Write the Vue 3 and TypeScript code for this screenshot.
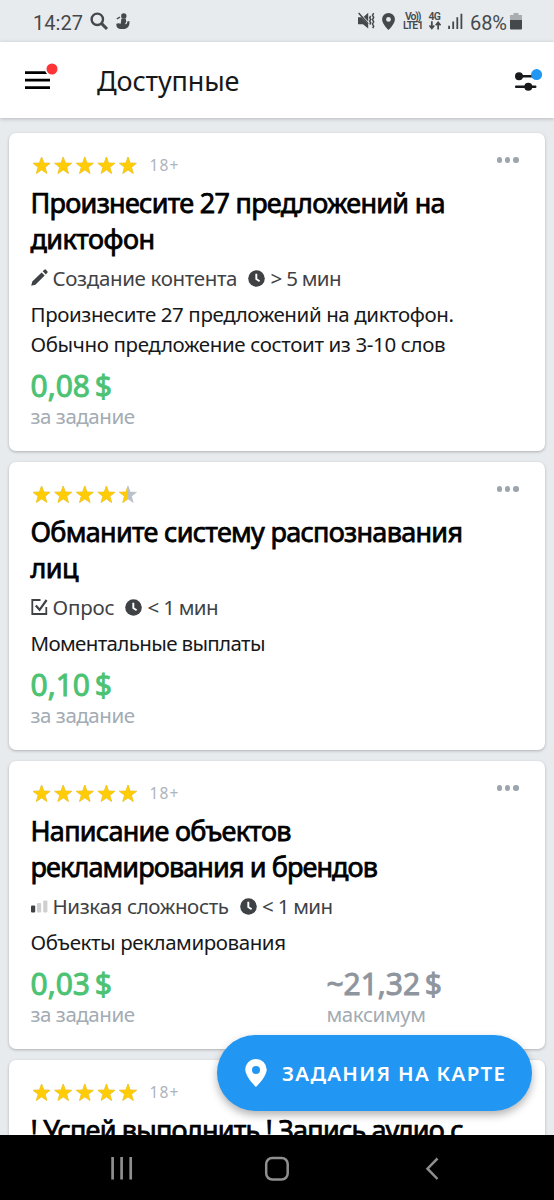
<script setup lang="ts">
import type { Directive } from 'vue'

interface Line {
  text: string
  width: number
}

interface Task {
  id: number
  rating: number
  adult: boolean
  title: Line[]
  kind?: 'pencil' | 'check' | 'level'
  kindLabel?: Line
  time?: string
  description?: Line[]
  price?: string
  max?: string
}

const tasks: Task[] = [
  {
    id: 1,
    rating: 4.9,
    adult: true,
    title: [
      { text: 'Произнесите 27 предложений на', width: 415 },
      { text: 'диктофон', width: 124.5 },
    ],
    kind: 'pencil',
    kindLabel: { text: 'Создание контента', width: 185 },
    time: '> 5 мин',
    description: [
      { text: 'Произнесите 27 предложений на диктофон.', width: 423.5 },
      { text: 'Обычно предложение состоит из 3-10 слов', width: 415 },
    ],
    price: '0,08 $',
  },
  {
    id: 2,
    rating: 4.5,
    adult: false,
    title: [
      { text: 'Обманите систему распознавания', width: 432.5 },
      { text: 'лиц', width: 48 },
    ],
    kind: 'check',
    kindLabel: { text: 'Опрос', width: 62 },
    time: '< 1 мин',
    description: [{ text: 'Моментальные выплаты', width: 235 }],
    price: '0,10 $',
  },
  {
    id: 3,
    rating: 5,
    adult: true,
    title: [
      { text: 'Написание объектов', width: 261 },
      { text: 'рекламирования и брендов', width: 347.5 },
    ],
    kind: 'level',
    kindLabel: { text: 'Низкая сложность', width: 176.5 },
    time: '< 1 мин',
    description: [{ text: 'Объекты рекламирования', width: 255.5 }],
    price: '0,03 $',
    max: '~21,32 $',
  },
  {
    id: 4,
    rating: 5,
    adult: true,
    title: [{ text: '! Успей выполнить ! Запись аудио с', width: 433 }],
  },
]

const starPath = 'M9 .6 11.1 6.700 17.500 6.900 12.400 10.800 14.200 17 9 13.400 3.800 17 5.600 10.800 .5 6.900 6.900 6.700Z'

/** Tracks a line of text so that it spans the given width. */
const vFit: Directive<HTMLElement, number> = {
  mounted(el, { value }) {
    const count = (el.textContent ?? '').length
    const natural = el.getBoundingClientRect().width
    const spacing = (value - natural) / Math.max(1, count - 1)
    el.style.letterSpacing = `${spacing.toFixed(3)}px`
    el.style.marginRight = `${(-spacing).toFixed(3)}px`
  },
}

function fill(rating: number, n: number): number {
  return 18.5 * Math.min(1, Math.max(0, rating - n + 1))
}
</script>

<template>
  <div class="screen">
    <div class="status">
      <span v-fit="50" class="clock">14:27</span>
      <svg class="s-search" width="19" height="19" viewBox="0 0 19 19">
        <circle cx="7.3" cy="7.3" r="5.7" fill="none" stroke="#45494c" stroke-width="2.4" />
        <path d="M11.4 11.4 17 17" stroke="#45494c" stroke-width="3" />
      </svg>
      <svg class="s-app" width="14" height="17" viewBox="0 0 14 17" fill="#45494c">
        <circle cx="7.8" cy="3" r="2.7" />
        <path d="M5.4 5.6h4.3l.6 3.2-1.4 2.4c1.8.1 2.6-.9 2.3-2.6l2.2-.5c.5 4-1.1 7.4-4.6 7.9H4.2C1.8 15.900 0 13.700 .4 10.800c1.300-.9 3-.8 4.300-.1Z" />
        <path d="M.8 5.800 4 4.200" stroke="#45494c" stroke-width="1.300" />
      </svg>
      <span class="spacer"></span>
      <svg class="s-mute" width="17" height="18" viewBox="0 0 17 18" fill="#45494c">
        <path d="M0 5.200h3.400L10.200 12.500V16.600L5 12.200H0ZM10.200 .8v8.600L5.800 4.700Z" />
        <path d="M.6 1 10.200 11.800" stroke="#45494c" stroke-width="1.500" />
        <path d="M12.700 4l-1 1.700 1 1.700-1 1.700 1 1.700-1 1.700M15.700 1.200l-1.200 2 1.200 2.200-1.200 2.200 1.200 2.200-1.200 2.200 1.200 2.200-1 2" fill="none" stroke="#45494c" stroke-width="1.500" />
      </svg>
      <svg class="s-pin" width="13" height="17" viewBox="0 0 13 17">
        <path fill="#45494c" fill-rule="evenodd" d="M6.500 0A6.400 6.400 0 0 0 .1 6.400C.1 10.900 6.500 17 6.500 17s6.400-6.100 6.400-10.600A6.400 6.400 0 0 0 6.500 0Zm0 4a2.400 2.400 0 1 1 0 4.800 2.400 2.400 0 0 1 0-4.800Z" />
      </svg>
      <span class="duo volte"><b v-fit="16.5">Vo))</b><b v-fit="20.5">LTE1</b></span>
      <span class="duo net">
        <b v-fit="12.5">4G</b>
        <svg width="12" height="9" viewBox="0 0 11 8">
          <path d="M2.600 0v6M.4 4l2.200 2.600L4.800 4M8.400 7.600v-6M6.200 3.800l2.200-2.600 2.200 2.600" fill="none" stroke="#45494c" stroke-width="1.600" />
        </svg>
      </span>
      <svg class="s-signal" width="15" height="16" viewBox="0 0 15 16" fill="#45494c">
        <path d="M.2 12.700h1.800V16H.2zM4.300 8.500h1.800V16H4.300zM8.400 4.200h1.800V16H8.400zM12.500 .8h1.800V16h-1.800z" />
      </svg>
      <span v-fit="37" class="percent">68%</span>
      <svg class="s-battery" width="12" height="17" viewBox="0 0 12 17">
        <path fill="#a9adaf" d="M3.500 0h5v2H12v6H0V2h3.500z" />
        <path fill="#45494c" d="M0 7h12v8.500a1 1 0 0 1-1 1H1a1 1 0 0 1-1-1z" />
      </svg>
    </div>

    <header class="bar">
      <svg class="menu" width="34" height="28" viewBox="0 0 34 28">
        <path d="M1 9.700h25M1 17.200h25M1 24.700h25" stroke="#000" stroke-width="2.700" />
        <circle cx="28" cy="6" r="7" fill="#fff" />
        <circle cx="28" cy="6" r="5.500" fill="#fd3536" />
      </svg>
      <h1 v-fit="142.5">Доступные</h1>
      <svg class="filter" width="29" height="24" viewBox="0 0 29 24">
        <path d="M5 8.200h16M2.200 18.700h19" stroke="#17191b" stroke-width="2.600" stroke-linecap="round" />
        <circle cx="5" cy="8.200" r="4" fill="#17191b" />
        <circle cx="14.300" cy="18.700" r="4" fill="#17191b" />
        <circle cx="22.600" cy="6.600" r="5.500" fill="#2196f3" />
      </svg>
    </header>

    <main class="feed">
      <article v-for="task in tasks" :key="task.id" class="card">
        <div class="top">
          <svg class="stars" width="107" height="19" viewBox="0 0 107 19">
            <defs>
              <clipPath v-for="n in 5" :id="`star-${task.id}-${n}`" :key="n">
                <rect x="-0.5" y="0" :width="fill(task.rating, n)" height="19" />
              </clipPath>
            </defs>
            <g v-for="n in 5" :key="n" class="star" :transform="`translate(${(n - 1) * 21.6 + 1.6} 0.4)`">
              <path :d="starPath" fill="#b9c0c8" stroke="#b9c0c8" />
              <path :d="starPath" fill="#ffcc06" stroke="#ffcc06" :clip-path="`url(#star-${task.id}-${n})`" />
            </g>
          </svg>
          <span v-if="task.adult" v-fit="29" class="age">18+</span>
          <span class="dots"><i></i><i></i><i></i></span>
        </div>

        <h2>
          <span v-for="line in task.title" :key="line.text" class="line"><span v-fit="line.width" class="fit">{{ line.text }}</span></span>
        </h2>

        <div v-if="task.kindLabel" class="meta">
          <svg v-if="task.kind === 'pencil'" class="kind" width="17" height="18" viewBox="0 0 17 18" fill="#3f4245">
            <path d="M.2 16.800 1.300 12.600 10.600 3.400l3.100 3.100-9.300 9.200ZM11.700 2.300l1.600-1.500a1.200 1.200 0 0 1 1.700 0l1.300 1.400a1.200 1.200 0 0 1 0 1.600l-1.500 1.600Z" />
          </svg>
          <svg v-else-if="task.kind === 'check'" class="kind" width="17" height="18" viewBox="0 0 17 18" fill="none" stroke="#3f4245">
            <path d="M9.500 2H1.300v14h14V9" stroke-width="1.800" />
            <path d="M4.800 7.500 8.600 11.800 15.600 2" stroke-width="2.200" />
          </svg>
          <svg v-else class="kind" width="17" height="18" viewBox="0 0 17 18">
            <rect x="0" y="8.500" width="4.200" height="7" rx="1" fill="#3f4245" />
            <rect x="6" y="6" width="4.200" height="9.500" rx="1" fill="#cfcfcf" />
            <rect x="12.200" y="3.500" width="4.200" height="12" rx="1" fill="#cfcfcf" />
          </svg>
          <span v-fit="task.kindLabel.width">{{ task.kindLabel.text }}</span>
          <svg class="time" width="17" height="17" viewBox="0 0 17 17">
            <circle cx="8.500" cy="8.500" r="8.300" fill="#3f4245" />
            <path d="M8.300 3.800v5.200l3.300 2.200" fill="none" stroke="#fff" stroke-width="1.900" />
          </svg>
          <span v-fit="71">{{ task.time }}</span>
        </div>

        <p v-if="task.description" class="desc">
          <span v-for="line in task.description" :key="line.text" class="line"><span v-fit="line.width" class="fit">{{ line.text }}</span></span>
        </p>

        <div v-if="task.price" class="money">
          <div class="sum">
            <strong v-fit="81.5">{{ task.price }}</strong>
            <small v-fit="104.5">за задание</small>
          </div>
          <div v-if="task.max" class="sum max">
            <strong v-fit="115.5">{{ task.max }}</strong>
            <small v-fit="99.5">максимум</small>
          </div>
        </div>
      </article>
    </main>

    <button class="fab" type="button">
      <svg width="22" height="28" viewBox="0 0 22 28">
        <path fill="#fff" fill-rule="evenodd" d="M11 0A10.700 10.700 0 0 0 .3 10.600C.3 18 11 28 11 28s10.700-10 10.700-17.400A10.700 10.700 0 0 0 11 0Zm0 7a4 4 0 1 1 0 8 4 4 0 0 1 0-8Z" />
      </svg>
      <span v-fit="223">ЗАДАНИЯ НА КАРТЕ</span>
    </button>

    <nav class="nav">
      <svg width="554" height="65" viewBox="0 0 554 65" fill="none" stroke="#8f8f8f">
        <path d="M112.600 22v22.500M121.600 22v22.500M130.700 22v22.500" stroke-width="2.700" />
        <rect x="266.200" y="23" width="21.500" height="21.500" rx="6" stroke-width="2.500" />
        <path d="M437.500 23.500 427.500 33.700 437.500 44" stroke-width="2.500" />
      </svg>
    </nav>
  </div>
</template>

<style>
html,
body {
  margin: 0;
  overflow: hidden;
}
</style>

<style scoped>
.screen {
  position: relative;
  display: flex;
  flex-direction: column;
  width: 554px;
  height: 1200px;
  overflow: hidden;
  background: #e8ebee;
  font-family: 'Noto Sans', 'Open Sans', sans-serif;
  color: #17181a;
}

.status {
  display: flex;
  align-items: center;
  flex: none;
  box-sizing: border-box;
  height: 42px;
  padding: 0 32px 0 33px;
  font-family: Roboto, sans-serif;
  font-size: 20px;
  color: #45494c;
  background: #e8ebee;
}

.status svg {
  flex: none;
}

.clock,
.percent {
  margin-top: 3px;
  white-space: nowrap;
}

.s-search {
  margin-left: 7px;
}

.s-app {
  margin-left: 7px;
}

.spacer {
  flex: 1;
}

.s-mute {
  margin-right: 7px;
}

.s-pin {
  margin-right: 8px;
}

.duo {
  display: flex;
  flex-direction: column;
  align-items: center;
  font-size: 10.5px;
  line-height: 9px;
}

.duo b {
  font-weight: 600;
  white-space: nowrap;
}

.volte {
  margin-right: 5px;
}

.net {
  margin-right: 7px;
}

.s-signal {
  margin-right: 7px;
}

.s-battery {
  margin-left: 3px;
}

.bar {
  position: relative;
  display: flex;
  align-items: center;
  flex: none;
  box-sizing: border-box;
  height: 76px;
  padding: 0 11px 0 24px;
  background: #fff;
  box-shadow: 0 1px 4px rgba(0, 0, 0, 0.22);
}

.menu {
  margin-top: -7px;
}

h1 {
  margin: 2px 0 0 39px;
  font-size: 27px;
  font-weight: 400;
  line-height: 36px;
  white-space: nowrap;
}

.filter {
  margin-left: auto;
}

.feed {
  display: flex;
  flex: 1;
  flex-direction: column;
  gap: 11px;
  min-height: 0;
  overflow: hidden;
  padding: 15px 9px 0 9px;
}

.card {
  flex: none;
  box-sizing: border-box;
  padding: 0 22px 25px 21.5px;
  border-radius: 7px;
  background: #fff;
  box-shadow: 0 1px 3px rgba(0, 0, 0, 0.25);
}

.top {
  display: flex;
  align-items: center;
  height: 52px;
  padding-top: 14px;
  box-sizing: border-box;
}

.stars {
  flex: none;
  margin-top: -1px;
}

.star path {
  stroke-width: 0.7;
  stroke-linejoin: round;
}

.age {
  margin: -2px 0 0 12px;
  font-size: 15.5px;
  line-height: 20px;
  color: #aeb4bb;
}

.dots {
  display: flex;
  gap: 2.8px;
  margin: -12px 4.5px 0 auto;
}

.dots i {
  width: 5.4px;
  height: 5.4px;
  border-radius: 50%;
  background: #9da5ae;
}

h2,
p {
  margin: 0;
}

.line {
  display: block;
  white-space: nowrap;
}

.fit {
  display: inline-block;
}

h2 {
  font-size: 27px;
  font-weight: 400;
  line-height: 36px;
  color: #000;
  -webkit-text-stroke: 0.75px #000;
}

.meta {
  display: flex;
  align-items: center;
  height: 30px;
  margin-top: 6px;
  font-size: 20.5px;
  line-height: 30px;
  color: #3f4245;
  white-space: nowrap;
}

.kind {
  margin-right: 5px;
}

.time {
  margin: 0 5px 0 11px;
}

.desc {
  margin-top: 6px;
  font-size: 20.5px;
  line-height: 30px;
}

.money {
  display: grid;
  grid-template-columns: 296px auto;
  margin-top: 7px;
}

.sum {
  display: flex;
  flex-direction: column;
  align-items: flex-start;
  white-space: nowrap;
}

strong {
  font-size: 30px;
  font-weight: 400;
  line-height: 40px;
  word-spacing: -3px;
  color: #4cc273;
  -webkit-text-stroke: 0.9px #4cc273;
}

.max strong {
  color: #8e959e;
  -webkit-text-stroke-color: #8e959e;
}

small {
  font-size: 20.5px;
  line-height: 20px;
  color: #a3abb3;
}

.fab {
  position: absolute;
  top: 1035px;
  left: 217px;
  display: flex;
  align-items: center;
  box-sizing: border-box;
  width: 315px;
  height: 76px;
  padding: 0 0 0 28px;
  border: 0;
  border-radius: 38px;
  background: #2196f3;
  box-shadow: 0 4px 9px rgba(0, 0, 0, 0.3);
  color: #fff;
  font-family: inherit;
  font-size: 20.5px;
  font-weight: 600;
  white-space: nowrap;
}

.fab svg {
  flex: none;
  margin-right: 15px;
}

.nav {
  position: relative;
  flex: none;
  height: 65px;
  background: #000;
}

.nav svg {
  display: block;
}
</style>
